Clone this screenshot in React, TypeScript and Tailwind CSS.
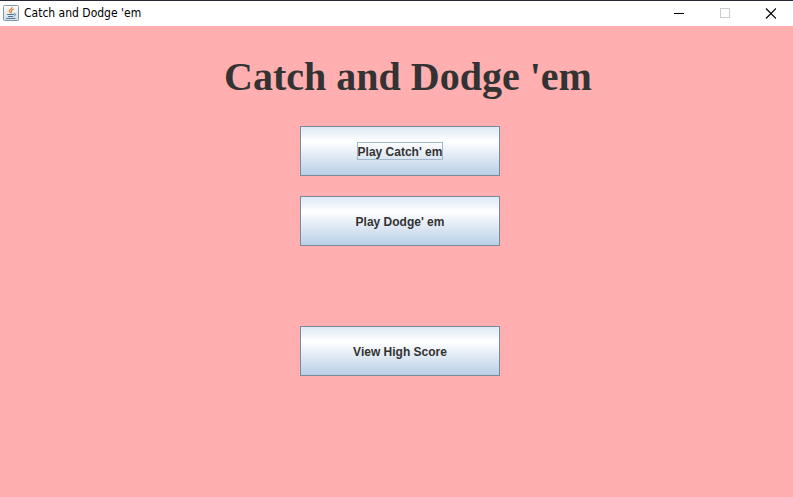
import type { ReactNode } from "react";

const APP_NAME = "Catch and Dodge 'em";

function JavaIcon() {
	return (
		<svg width="16" height="16" viewBox="0 0 16 16" aria-hidden="true">
			<defs>
				<linearGradient id="java-tile" x1="0" y1="0" x2="0" y2="1">
					<stop offset="0" stopColor="#fdfdfd" />
					<stop offset="1" stopColor="#d3dce3" />
				</linearGradient>
			</defs>
			<rect
				x="0.5"
				y="0.5"
				width="15"
				height="15"
				rx="1"
				fill="url(#java-tile)"
				stroke="#8499a8"
			/>
			<g fill="none" strokeLinecap="round">
				<path
					d="M9 2.2c.9 1.7-3.1 2.4-2.7 4 .2.8.9 1.1 1.2 1.6M10.6 4.2c-1.8.6-2.7 1.4-2.2 2.2.3.5.5.9-.1 1.4"
					stroke="#e8883c"
					strokeWidth="1.2"
				/>
				<path
					d="M4.5 9.5h6M5.5 11.5h4M11 8.8c2.4-.7 2.2 1.6.2 2.2M3.5 13.4h8.5"
					stroke="#4f749a"
					strokeWidth="1"
				/>
			</g>
		</svg>
	);
}

function WindowButton({
	label,
	disabled,
	children,
}: {
	label: string;
	disabled?: boolean;
	children: ReactNode;
}) {
	return (
		<button
			type="button"
			aria-label={label}
			disabled={disabled}
			className="flex w-[46px] items-center justify-center"
		>
			<svg
				width="12"
				height="12"
				viewBox="0 0 12 12"
				fill="none"
				stroke={disabled ? "#cccccc" : "#000000"}
				aria-hidden="true"
			>
				{children}
			</svg>
		</button>
	);
}

function TitleBar() {
	return (
		<header className="flex h-[26px] items-stretch justify-between border-t border-[#2b2838] bg-white">
			<div className="flex items-center gap-[5px] pb-px pl-[3px]">
				<JavaIcon />
				<span className="font-['DejaVu_Sans_Condensed','Noto_Sans',sans-serif] text-[12px] leading-4 text-black">
					{APP_NAME}
				</span>
			</div>
			<div className="flex">
				<WindowButton label="Minimize">
					<path d="M2 5.5h10" />
				</WindowButton>
				<WindowButton label="Maximize" disabled>
					<rect x="2.5" y="0.5" width="9" height="9" />
				</WindowButton>
				<WindowButton label="Close">
					<path d="M2 0.5l10 10M12 0.5L2 10.5" strokeWidth="1.2" />
				</WindowButton>
			</div>
		</header>
	);
}

function MenuButton({
	focused,
	children,
}: {
	focused?: boolean;
	children: ReactNode;
}) {
	return (
		<button
			type="button"
			className="flex h-[50px] w-[200px] items-center justify-center border border-[#7a8a99] bg-linear-to-b from-[#dde8f3] via-white via-30% to-[#b8cfe5] font-['Liberation_Sans',sans-serif] text-[12px] leading-[14px] font-bold text-[#333333]"
		>
			<span
				className={
					focused
						? "border border-[#a3b8cc] pt-0.5"
						: "border border-transparent pt-0.5"
				}
			>
				{children}
			</span>
		</button>
	);
}

export default function App() {
	return (
		<div className="flex min-h-screen flex-col bg-[#ffafaf]">
			<TitleBar />
			<main className="flex flex-1 flex-col items-center pt-6 pl-[7px]">
				<h1 className="pl-4 font-['Liberation_Serif',serif] text-[40px] leading-[54px] font-bold text-[#333333]">
					{APP_NAME}
				</h1>
				<div className="mt-[22px] flex flex-col gap-5">
					<MenuButton focused>Play Catch&apos; em</MenuButton>
					<MenuButton>Play Dodge&apos; em</MenuButton>
				</div>
				<div className="mt-20">
					<MenuButton>View High Score</MenuButton>
				</div>
			</main>
		</div>
	);
}
